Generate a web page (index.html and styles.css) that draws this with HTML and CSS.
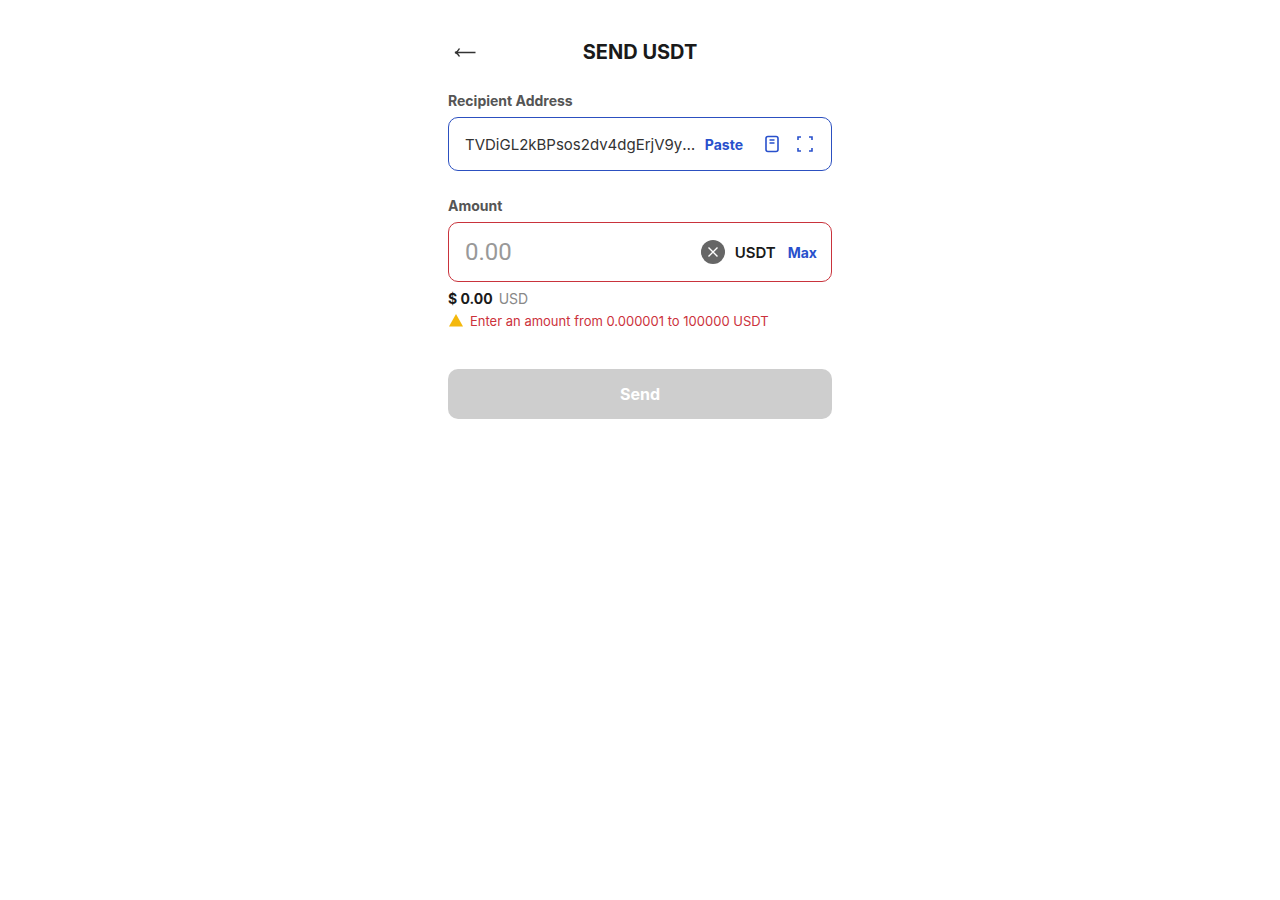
FILE: index.html
```html
<!DOCTYPE html>
<html lang="en">
<head>
  <meta charset="UTF-8">
  <title>Send USDT</title>
  <meta name="viewport" content="width=device-width, initial-scale=1.0">
  <link rel="stylesheet" href="styles.css">
</head>
<body>
  <main class="screen">
    <header class="topbar">
      <button type="button" class="back" aria-label="Back">
        <svg width="24" height="16" viewBox="0 0 24 16" fill="none" stroke="currentColor" stroke-width="1.5">
          <path d="M22.500 8.500H3M6.500 4.500C5.500 6.500 4 8 2 8.500C4 9 5.500 10.500 6.500 12.500"/>
        </svg>
      </button>
      <h1>SEND USDT</h1>
    </header>

    <form>
      <!-- Recipient -->
      <div class="field">
        <label for="address">Recipient Address</label>
        <div class="box box-address">
          <input id="address" class="address" type="text" value="TVDiGL2kBPsos2dv4dgErjV9yQm7Xw3bKc">
          <button type="button" class="link">Paste</button>
          <button type="button" class="icon icon-book" aria-label="Address book">
            <svg width="20" height="20" viewBox="0 0 20 20" fill="none" stroke="currentColor" stroke-width="1.6">
              <rect x="4" y="2.5" width="12" height="15" rx="2"/>
              <path d="M7.500 6h5M7.500 9h5"/>
            </svg>
          </button>
          <button type="button" class="icon" aria-label="Scan QR code">
            <svg width="20" height="20" viewBox="0 0 20 20" fill="none" stroke="currentColor" stroke-width="1.6">
              <path d="M3 6V3h3M14 3h3v3M17 14v3h-3M6 17H3v-3"/>
            </svg>
          </button>
        </div>
      </div>

      <!-- Amount -->
      <div class="field">
        <label for="amount">Amount</label>
        <div class="box box-amount">
          <input id="amount" class="amount" type="text" inputmode="decimal" placeholder="0.00">
          <button type="button" class="clear" aria-label="Clear">
            <svg width="12" height="12" viewBox="0 0 12 12" fill="none" stroke="currentColor" stroke-width="1.4">
              <path d="M1.500 1.500l9 9M10.500 1.500l-9 9"/>
            </svg>
          </button>
          <span class="unit">USDT</span>
          <button type="button" class="link">Max</button>
        </div>
        <p class="fiat"><strong>$ 0.00</strong> <span>USD</span></p>
        <p class="error">
          <svg width="16" height="16" viewBox="0 0 16 16"><path d="M8 1l7 12.500H1z" fill="#f4b80c"/></svg>
          Enter an amount from 0.000001 to 100000 USDT
        </p>
      </div>

      <button type="submit" class="send" disabled>Send</button>
    </form>
  </main>
</body>
</html>
```

FILE: styles.css
```css
* {
  box-sizing: border-box;
}
body {
  margin: 0;
  background: #fff;
  color: #1a1a1a;
  font-family: Inter, sans-serif;
}
h1, p {
  margin: 0;
}
button, input {
  font-family: inherit;
  margin: 0;
  padding: 0;
  border: 0;
  background: none;
}
button {
  cursor: pointer;
}
svg {
  display: block;
}
.screen {
  max-width: 416px;
  margin: 0 auto;
  padding: 32px 16px;
}

/* Header */
.topbar {
  display: grid;
  grid-template-columns: 34px 1fr 34px;
  align-items: center;
  height: 40px;
  margin-bottom: 20px;
}
.back {
  display: flex;
  align-items: center;
  justify-content: center;
  height: 40px;
  color: #333;
}
h1 {
  font-size: 20px;
  line-height: 24px;
  font-weight: 700;
  text-align: center;
}

/* Fields */
.field {
  margin-bottom: 26px;
}
label {
  display: block;
  margin-bottom: 7px;
  font-size: 14px;
  line-height: 18px;
  font-weight: 700;
  color: #555;
}
.box {
  display: flex;
  align-items: center;
  border: 1px solid #2c50c0;
  border-radius: 10px;
  padding: 0 14px 0 16px;
}
.box-address {
  height: 54px;
  padding-right: 16px;
}
.box-amount {
  height: 60px;
  border-color: #c9333c;
}
input {
  flex: 1;
  min-width: 0;
  outline: none;
  color: #333;
}
.address {
  font-size: 15px;
  text-overflow: ellipsis;
}
.amount {
  font-family: Roboto, sans-serif;
  font-size: 24px;
}
.amount::placeholder {
  color: #999;
}
.link {
  margin-left: 5px;
  font-size: 14px;
  font-weight: 700;
  color: #2850cc;
}
.icon {
  margin-left: 13px;
  color: #2850cc;
}
.icon-book {
  margin-left: 19px;
}
.clear {
  display: flex;
  align-items: center;
  justify-content: center;
  width: 24px;
  height: 24px;
  border-radius: 50%;
  background: #666;
  color: #fff;
}
.unit {
  margin: 0 7px 0 10px;
  font-size: 15px;
  font-weight: 600;
}

/* Notes under the amount */
.fiat {
  display: flex;
  gap: 6px;
  margin-top: 8px;
  font-size: 14px;
  line-height: 18px;
  color: #888;
}
.fiat strong {
  font-weight: 700;
  color: #1a1a1a;
}
.error {
  display: flex;
  align-items: center;
  gap: 6px;
  margin-top: 4px;
  font-size: 13px;
  line-height: 18px;
  color: #cc323c;
}

.send {
  width: 100%;
  height: 50px;
  margin-top: 13px;
  border-radius: 10px;
  background: #cecece;
  color: #fff;
  font-size: 16px;
  font-weight: 700;
}
```
